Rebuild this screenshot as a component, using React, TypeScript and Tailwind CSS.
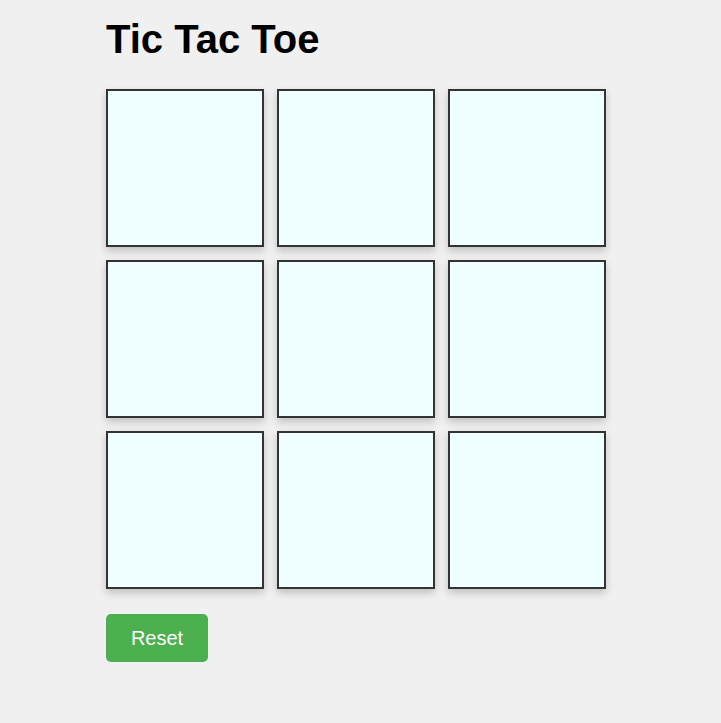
export default function App() {
  const cells = Array.from({ length: 9 }, (_, i) => i);

  return (
    <div className="min-h-screen bg-[#f0f0f0] pl-[106px] pt-4 font-['Liberation_Sans',Arial,sans-serif]">
      <h1 className="text-[40px] leading-[46px] font-bold text-black">Tic Tac Toe</h1>

      <div className="mt-[27px] grid grid-cols-[repeat(3,158px)] gap-[13px]">
        {cells.map((i) => (
          <button
            key={i}
            className="h-[158px] w-[158px] border-2 border-[#333] bg-[#f0ffff] shadow-[0_4px_8px_rgba(0,0,0,0.2)]"
          />
        ))}
      </div>

      <button className="mt-[25px] h-12 w-[102px] rounded-[5px] bg-[#4caf50] text-[20px] text-white">
        Reset
      </button>
    </div>
  );
}
